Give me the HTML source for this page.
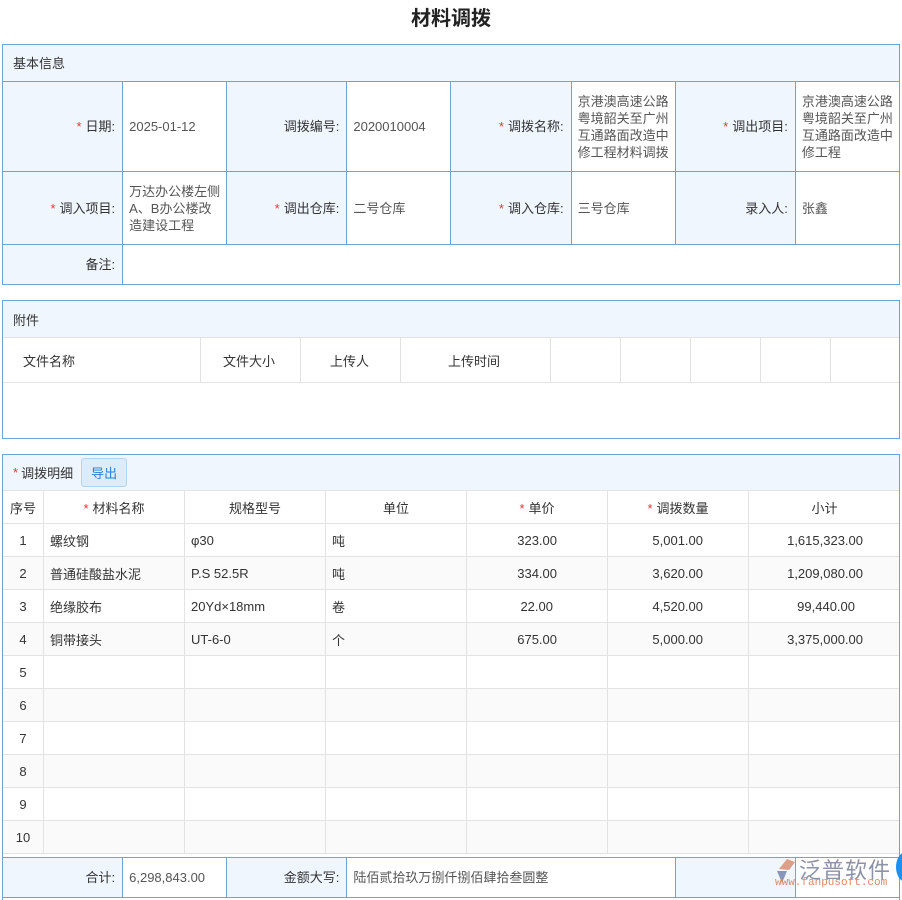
<!DOCTYPE html>
<html><head><meta charset="utf-8"><style>
*{box-sizing:border-box;margin:0;padding:0}
body{width:902px;height:900px;background:#fff;font-family:"Liberation Sans","Noto Sans CJK SC",sans-serif;font-size:13px;color:#333;position:relative;overflow:hidden}
.a{position:absolute}
.t{position:absolute;left:0;width:902px;text-align:center;font-size:20px;font-weight:bold;top:2px;color:#222}
table{border-collapse:collapse;table-layout:fixed}
.bi{position:absolute;left:2px;top:44px;width:898px;border:1px solid #6aa6dc}
.bi td{border:1px solid #6aa6dc;line-height:17px}
.bi td.l{background:#eff6fe;text-align:right;padding-right:7px}
.bi td.v{padding:0 4px 0 6px;color:#555}
.s{color:#e33;margin-right:4px}
.box{position:absolute;border:1px solid #6aa6dc}
.hd{position:absolute;background:#eff6fe;left:0;right:0;top:0;padding-left:10px;display:flex;align-items:center}
.dt td{border:1px solid #e3e3e3;height:33px;padding:0 6px;color:#333}
</style></head><body>
<div class="t">材料调拨</div>

<table class="bi">
<colgroup><col style="width:120px"><col style="width:104px"><col style="width:120px"><col style="width:104px"><col style="width:120px"><col style="width:104px"><col style="width:120px"><col style="width:104px"></colgroup>
<tr style="height:37px"><td colspan="8" style="background:#eff6fe;padding-left:10px">基本信息</td></tr>
<tr style="height:90px">
<td class="l"><span class="s">*</span>日期:</td><td class="v">2025-01-12</td>
<td class="l">调拨编号:</td><td class="v">2020010004</td>
<td class="l"><span class="s">*</span>调拨名称:</td><td class="v">京港澳高速公路粤境韶关至广州互通路面改造中修工程材料调拨</td>
<td class="l"><span class="s">*</span>调出项目:</td><td class="v">京港澳高速公路粤境韶关至广州互通路面改造中修工程</td></tr>
<tr style="height:73px">
<td class="l"><span class="s">*</span>调入项目:</td><td class="v">万达办公楼左侧A、B办公楼改造建设工程</td>
<td class="l"><span class="s">*</span>调出仓库:</td><td class="v">二号仓库</td>
<td class="l"><span class="s">*</span>调入仓库:</td><td class="v">三号仓库</td>
<td class="l">录入人:</td><td class="v">张鑫</td></tr>
<tr style="height:40px"><td class="l">备注:</td><td colspan="7"></td></tr>
</table>

<div class="box" style="left:2px;top:300px;width:898px;height:139px">
<div class="hd" style="height:37px;border-bottom:1px solid #e3e3e3">附件</div>
<div class="a" style="top:37px;left:0;width:896px;height:45px;border-bottom:1px solid #e3e3e3">
<div class="a" style="left:20px;top:13px">文件名称</div>
<div class="a" style="left:197px;top:0;height:44px;border-left:1px solid #e3e3e3"></div>
<div class="a" style="left:220px;top:13px">文件大小</div>
<div class="a" style="left:297px;top:0;height:44px;border-left:1px solid #e3e3e3"></div>
<div class="a" style="left:327px;top:13px">上传人</div>
<div class="a" style="left:397px;top:0;height:44px;border-left:1px solid #e3e3e3"></div>
<div class="a" style="left:445px;top:13px">上传时间</div>
<div class="a" style="left:547px;top:0;height:44px;border-left:1px solid #e3e3e3"></div>
<div class="a" style="left:617px;top:0;height:44px;border-left:1px solid #e3e3e3"></div>
<div class="a" style="left:687px;top:0;height:44px;border-left:1px solid #e3e3e3"></div>
<div class="a" style="left:757px;top:0;height:44px;border-left:1px solid #e3e3e3"></div>
<div class="a" style="left:827px;top:0;height:44px;border-left:1px solid #e3e3e3"></div>
</div>
</div>

<div class="box" style="left:2px;top:454px;width:898px;height:446px;border-bottom:none;overflow:hidden">
<div class="hd" style="height:36px;border-bottom:1px solid #e3e3e3"><span class="s" style="margin-right:3px">*</span>调拨明细
<span style="margin-left:8px;background:#dcecfb;border:1px solid #b5d3f0;border-radius:3px;color:#2a7fd4;padding:4px 9px">导出</span></div>
<table class="dt a" style="left:-1px;top:35px;width:898px">
<colgroup><col style="width:41px"><col style="width:141px"><col style="width:141px"><col style="width:141px"><col style="width:141px"><col style="width:141px"><col style="width:152px"></colgroup>
<tr style="text-align:center"><td style="padding:0;height:32px">序号</td><td><span class="s">*</span>材料名称</td><td>规格型号</td><td>单位</td><td><span class="s">*</span>单价</td><td><span class="s">*</span>调拨数量</td><td>小计</td></tr>
<tr><td style="text-align:center">1</td><td>螺纹钢</td><td>φ30</td><td>吨</td><td style="text-align:right;padding-right:50px">323.00</td><td style="text-align:right;padding-right:45px">5,001.00</td><td style="text-align:right;padding-right:37px">1,615,323.00</td></tr>
<tr style="background:#fafafa"><td style="text-align:center">2</td><td>普通硅酸盐水泥</td><td>P.S 52.5R</td><td>吨</td><td style="text-align:right;padding-right:50px">334.00</td><td style="text-align:right;padding-right:45px">3,620.00</td><td style="text-align:right;padding-right:37px">1,209,080.00</td></tr>
<tr><td style="text-align:center">3</td><td>绝缘胶布</td><td>20Yd×18mm</td><td>卷</td><td style="text-align:right;padding-right:54px">22.00</td><td style="text-align:right;padding-right:45px">4,520.00</td><td style="text-align:right;padding-right:45px">99,440.00</td></tr>
<tr style="background:#fafafa"><td style="text-align:center">4</td><td>铜带接头</td><td>UT-6-0</td><td>个</td><td style="text-align:right;padding-right:50px">675.00</td><td style="text-align:right;padding-right:45px">5,000.00</td><td style="text-align:right;padding-right:37px">3,375,000.00</td></tr>
<tr><td style="text-align:center">5</td><td></td><td></td><td></td><td></td><td></td><td></td></tr>
<tr style="background:#fafafa"><td style="text-align:center">6</td><td></td><td></td><td></td><td></td><td></td><td></td></tr>
<tr><td style="text-align:center">7</td><td></td><td></td><td></td><td></td><td></td><td></td></tr>
<tr style="background:#fafafa"><td style="text-align:center">8</td><td></td><td></td><td></td><td></td><td></td><td></td></tr>
<tr><td style="text-align:center">9</td><td></td><td></td><td></td><td></td><td></td><td></td></tr>
<tr style="background:#fafafa"><td style="text-align:center">10</td><td></td><td></td><td></td><td></td><td></td><td></td></tr>
</table>
</div>

<table class="bi" style="top:857px">
<colgroup><col style="width:120px"><col style="width:104px"><col style="width:120px"><col style="width:328px"><col style="width:120px"><col style="width:104px"></colgroup>
<tr style="height:40px"><td class="l">合计:</td><td class="v">6,298,843.00</td><td class="l">金额大写:</td><td class="v">陆佰贰拾玖万捌仟捌佰肆拾叁圆整</td><td class="l"></td><td class="v"></td></tr>
</table>

<div class="a" style="left:774px;top:856px;width:24px;height:30px">
<svg width="24" height="30"><path d="M5 13 L13 3 L21 6 L15 14 Z" fill="#d9896a" opacity=".8"/><path d="M3 15 L13 15 L8 27 Z" fill="#6e7fa8" opacity=".8"/></svg></div>
<div class="a" style="left:799px;top:853px;font-size:22px;color:#7a7f99;letter-spacing:1px;opacity:.85">泛普软件</div>
<div class="a" style="left:775px;top:877px;font-size:11px;color:#d9896a;font-family:'Liberation Mono',monospace">www.fanpusoft.com</div>
<div class="a" style="left:896px;top:852px;width:20px;height:30px;border-radius:50%;background:#1e90f0"></div>
</body></html>
